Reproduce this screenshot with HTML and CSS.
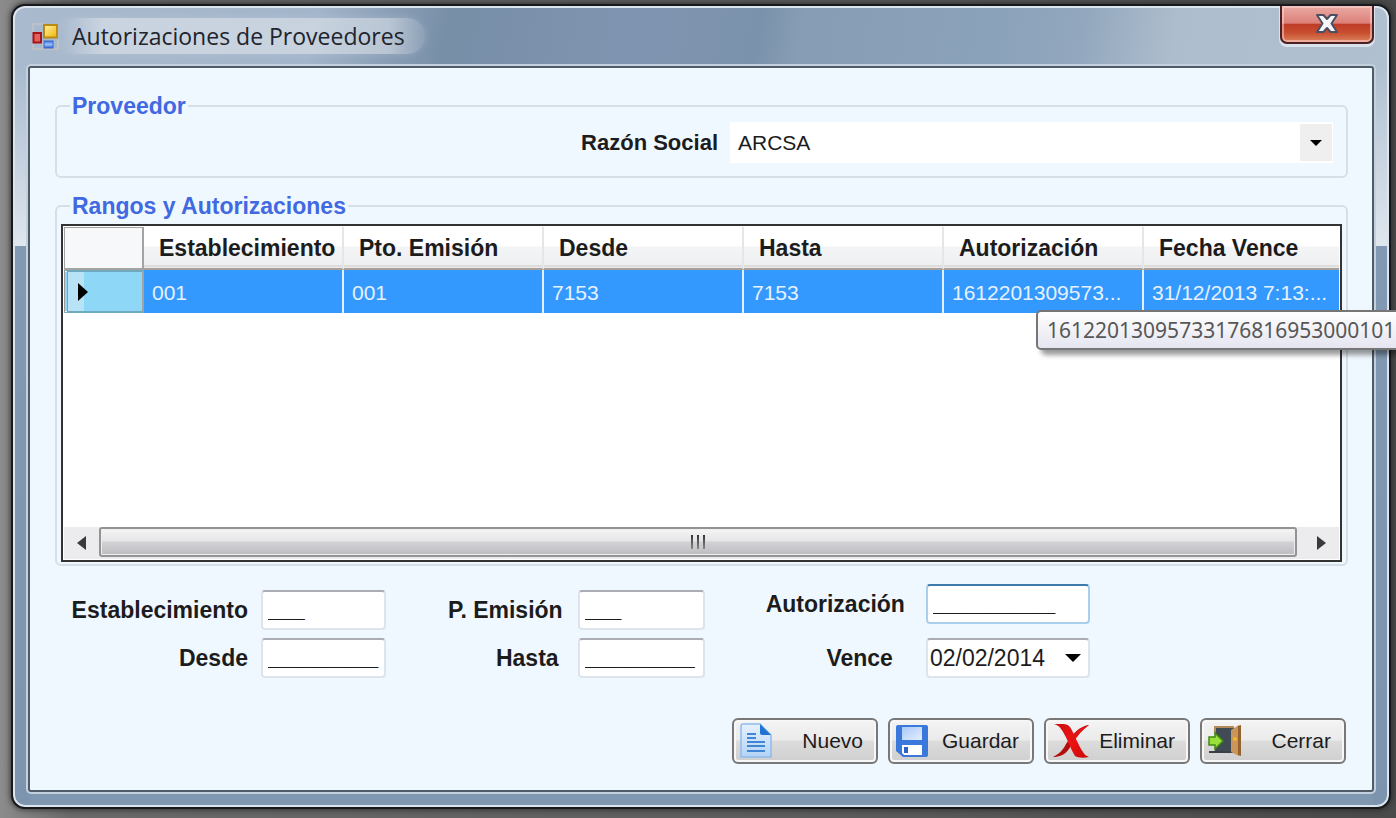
FILE: index.html
```html
<!DOCTYPE html>
<html lang="es">
<head>
<meta charset="utf-8">
<title>Autorizaciones de Proveedores</title>
<link rel="stylesheet" href="styles.css">
</head>
<body>
<div class="desktop">
  <main class="window">
    <header class="titlebar">
      <svg class="app-icon" width="27" height="27" viewBox="0 0 27 27" aria-hidden="true">
        <defs>
          <linearGradient id="gy" x1="0" y1="0" x2="1" y2="1"><stop offset="0" stop-color="#fff2a8"/><stop offset="1" stop-color="#f0b400"/></linearGradient>
          <linearGradient id="gb" x1="0" y1="0" x2="0" y2="1"><stop offset="0" stop-color="#3f74dc"/><stop offset=".5" stop-color="#9cc0fa"/><stop offset="1" stop-color="#2f62cc"/></linearGradient>
        </defs>
        <path d="M1 10V1h10M1 19v7h10v-8M11 26h15v-9" fill="none" stroke="#c3c3c3" stroke-width="1.5"/>
        <rect x="1.5" y="10" width="7.500" height="9.500" fill="#e2615a" stroke="#a8141c" stroke-width="2"/>
        <rect x="12" y="2" width="13" height="12.500" fill="url(#gy)" stroke="#b98a10" stroke-width="2"/>
        <rect x="12" y="18" width="9" height="7" fill="url(#gb)" stroke="#3a66c8" stroke-width="1"/>
      </svg>
      <h1 class="title">Autorizaciones de Proveedores</h1>
      <button class="close" type="button" aria-label="Cerrar ventana">
        <svg width="24" height="22" viewBox="0 0 24 22" aria-hidden="true">
          <path d="M2 2h6.500L12 6 15.500 2H22l-5.500 8.500L22 19h-6.500L12 15l-3.500 4H2l5.500-8.500z" fill="#f6f6f8" stroke="#4a4f64" stroke-width="2" stroke-linejoin="round"/>
        </svg>
      </button>
    </header>

    <form class="client">
      <fieldset class="group">
        <legend>Proveedor</legend>
        <div class="supplier">
          <label class="label" for="razon">Razón Social</label>
          <span class="combo">
            <select id="razon"><option>ARCSA</option></select>
            <span class="combo-arrow" aria-hidden="true"><i class="caret"></i></span>
          </span>
        </div>
      </fieldset>

      <fieldset class="group group-grid">
        <legend>Rangos y Autorizaciones</legend>
        <div class="grid">
          <table class="table">
            <colgroup><col class="col-head"><col class="col"><col class="col"><col class="col"><col class="col"><col class="col"><col></colgroup>
            <thead>
              <tr><td class="corner"></td><th>Establecimiento</th><th>Pto. Emisión</th><th>Desde</th><th>Hasta</th><th>Autorización</th><th>Fecha Vence</th></tr>
            </thead>
            <tbody>
              <tr><td class="row-head"><i class="row-mark"></i></td><td>001</td><td>001</td><td>7153</td><td>7153</td><td>1612201309573...</td><td>31/12/2013 7:13:...</td></tr>
            </tbody>
          </table>
          <div class="scroll">
            <button class="scroll-btn" type="button" aria-label="Desplazar a la izquierda"><i class="tri tri-left"></i></button>
            <div class="thumb"><i></i><i></i><i></i></div>
            <button class="scroll-btn" type="button" aria-label="Desplazar a la derecha"><i class="tri tri-right"></i></button>
          </div>
        </div>
      </fieldset>

      <div class="fields">
        <div class="pair pair-a">
          <label class="label" for="est">Establecimiento</label><input class="box" id="est" value="___">
          <label class="label" for="desde">Desde</label><input class="box" id="desde" value="_________">
        </div>
        <div class="pair pair-b">
          <label class="label" for="emi">P. Emisión</label><input class="box" id="emi" value="___">
          <label class="label inset-s" for="hasta">Hasta</label><input class="box" id="hasta" value="_________">
        </div>
        <div class="pair pair-c">
          <label class="label" for="aut">Autorización</label><input class="box active" id="aut" value="__________">
          <label class="label inset-m" for="vence">Vence</label>
          <span class="box date"><input id="vence" value="02/02/2014"><button type="button" aria-label="Abrir calendario"><i class="caret caret-l"></i></button></span>
        </div>
      </div>

      <div class="actions">
        <button class="btn" type="button">
          <svg width="32" height="36" viewBox="0 0 32 36" aria-hidden="true">
            <defs><linearGradient id="doc" x1="0" y1="0" x2="0" y2="1"><stop offset="0" stop-color="#e6f1fd"/><stop offset="1" stop-color="#b4d3f5"/></linearGradient></defs>
            <path d="M1 3q0-2 2-2h17l11 11v22H1z" fill="url(#doc)" stroke="#8fbcec" stroke-width="1.500"/>
            <path d="M20 1l11 11H22q-2 0-2-2z" fill="#1f73d2"/>
            <path d="M7 11h9M7 15h9M7 19h18M7 23h18M7 28h18" stroke="#3f86d6" stroke-width="2"/>
          </svg>
          <span>Nuevo</span>
        </button>
        <button class="btn" type="button">
          <svg width="32" height="32" viewBox="0 0 32 32" aria-hidden="true">
            <defs><linearGradient id="dsk" x1="0" y1="0" x2="1" y2="1"><stop offset="0" stop-color="#a9c8fa"/><stop offset="1" stop-color="#e4eefd"/></linearGradient></defs>
            <path d="M2 0h28q2 0 2 2v28q0 2-2 2H7l-7-6V2q0-2 2-2z" fill="#3b78dc"/>
            <path d="M6 2h20v13H6z" fill="url(#dsk)"/>
            <path d="M6 20h20v10H8l-2-2z" fill="#fff"/>
            <rect x="8" y="22" width="4" height="6" fill="#2a62c8"/>
          </svg>
          <span>Guardar</span>
        </button>
        <button class="btn" type="button">
          <svg width="38" height="34" viewBox="0 0 38 34" aria-hidden="true">
            <defs><linearGradient id="red" x1="0" y1="0" x2="1" y2="1"><stop offset="0" stop-color="#c81010"/><stop offset=".5" stop-color="#f01414"/><stop offset="1" stop-color="#c80808"/></linearGradient></defs>
            <path d="M37 1C27 2 20 11 14 20 11 26 7 30 1 33c6 0 12-2 16-8 5-9 11-18 20-24z" fill="#b40d0d"/>
            <path d="M2 0c6 0 13-1 16 3 5 8 8 18 13 25 1 2 3 4 6 5-5 1-11 1-14-1C18 24 14 11 9 5 7 2 5 1 2 0z" fill="url(#red)"/>
            <path d="M37 1C28 3 22 9 18 15l3 4c4-7 9-13 16-18z" fill="#e01515"/>
          </svg>
          <span>Eliminar</span>
        </button>
        <button class="btn" type="button">
          <svg width="34" height="32" viewBox="0 0 34 32" aria-hidden="true">
            <path d="M7 2h19v25H7z" fill="#414b55"/>
            <path d="M7 9V2h19" fill="none" stroke="#b48a58" stroke-width="2"/>
            <path d="M1 27h24" stroke="#3a3f45" stroke-width="2"/>
            <path d="M23 5l8-5v31l-8-4z" fill="#c99559"/><path d="M30 1l3-1v31l-3-1z" fill="#94632f"/>
            <circle cx="27" cy="14" r="2" fill="#f2b92e"/>
            <path d="M1 12h6V8l8 8-8 8v-4H1z" fill="#9be03a" stroke="#3f8a12" stroke-width="1.500"/>
          </svg>
          <span>Cerrar</span>
        </button>
      </div>
    </form>
  </main>
  <div class="tooltip" role="tooltip">16122013095733176816953000101</div>
</div>
</body>
</html>
```
FILE: styles.css
```css
* { box-sizing: border-box; }
body {
  margin: 0;
  font-family: "Liberation Sans", Arial, sans-serif;
  font-size: 21px;
  color: #1c1c1c;
}
button, input, select { font: inherit; color: inherit; margin: 0; }
button { padding: 0; border: 0; background: none; }

.desktop {
  position: relative;
  display: flex;
  min-height: 100vh;
  padding: 4px 5px 9px 11px;
  overflow: hidden;
  background: linear-gradient(90deg, #8c8c8c, #6a6a6a 5%, #5c5c5c 60%, #4a4a4a);
}
.window {
  flex: 1;
  min-width: 0;
  display: flex;
  flex-direction: column;
  padding: 0 15px 15px;
  border: 2px solid #17191c;
  border-radius: 14px;
  background:
    linear-gradient(180deg, #a9bace 60px, #dfe6ee 240px, #8299b3 240px, #7d94ae) left / 16px 100% no-repeat,
    linear-gradient(180deg, #b0c0d0 60px, #dfe6ee 240px, #8299b3 240px, #7d94ae) right / 16px 100% no-repeat,
    linear-gradient(100deg, #a9bace, #a3b5ca 300px, #788fa8 430px, #7f94b0 620px, #7b92ac 740px, #879db5 780px, #8ba2bb 980px, #93a8be 1060px, #aebdcd 1150px, #b0c0d0) top / 100% 64px no-repeat,
    #8097b1;
  box-shadow: inset 0 0 0 2px #dce5ee, 0 0 6px #222;
}
.titlebar {
  display: flex;
  align-items: flex-start;
  height: 60px;
  padding-left: 4px;
}
.app-icon { margin-top: 17px; }
.title {
  margin: 12px 0 0;
  padding: 0 20px 0 13px;
  font: 400 23px/36px "Open Sans", "Noto Sans", sans-serif;
  color: #20242c;
  border-radius: 18px;
  background: linear-gradient(90deg, rgba(255,255,255,0), rgba(255,255,255,.4) 12%, rgba(255,255,255,.4) 90%, rgba(255,255,255,.1));
  box-shadow: 0 0 8px rgba(255,255,255,.15);
}
.close {
  display: grid;
  place-items: center;
  width: 94px;
  height: 38px;
  margin-left: auto;
  border: 2px solid #4c2024;
  border-top: 0;
  border-radius: 0 0 7px 7px;
  background: linear-gradient(#e9aaa4, #dc8078 48%, #c03a26 50%, #c8502f 75%, #dd8460);
  box-shadow: inset 0 0 0 2px rgba(255,220,215,.5), 0 2px 0 1px rgba(235,242,248,.7);
}
.client {
  flex: 1;
  display: flex;
  flex-direction: column;
  margin: 0;
  padding: 25px 24px 26px 25px;
  border: 2px solid #505b68;
  border-radius: 3px;
  background: #f0f8ff;
  box-shadow: 0 0 0 2px #c3d0dd;
}

.group {
  min-width: 0;
  margin: 0 0 15px;
  padding: 3px 13px 13px;
  border: 2px solid #d6dfe7;
  border-radius: 6px;
}
.group legend {
  padding: 0 2px;
  font-weight: 700;
  font-size: 23px;
  line-height: 26px;
  color: #4169e1;
}
.group-grid { margin-bottom: 18px; padding: 5px 4px 2px; }
.group-grid legend { margin-left: 9px; }
.label { font-weight: 700; font-size: 23px; line-height: 26px; white-space: nowrap; }

.supplier { display: flex; align-items: center; justify-content: flex-end; gap: 12px; }
.supplier .label { font-size: 22px; }
.combo { position: relative; width: 603px; height: 41px; background: #fff; }
.combo select {
  width: 100%;
  height: 100%;
  padding: 0 40px 0 8px;
  border: 0;
  appearance: none;
  background: transparent;
}
.combo-arrow {
  position: absolute;
  top: 2px;
  right: 1px;
  bottom: 2px;
  display: grid;
  place-items: center;
  width: 32px;
  background: #efefef;
  pointer-events: none;
}
.caret { border: 6px solid transparent; border-top: 6px solid #000; border-bottom: 0; }
.caret-l { border-width: 8px 8px 0; }

.grid {
  display: flex;
  flex-direction: column;
  height: 338px;
  border: 2px solid #333;
  background: #fff;
  padding: 1px;
}
.table { width: 100%; table-layout: fixed; border-collapse: separate; border-spacing: 0; }
.col-head { width: 80px; }
.col { width: 200px; }
.table th, .table td { overflow: hidden; white-space: nowrap; text-align: left; }
.table th {
  height: 43px;
  padding: 2px 0 0 15px;
  font-size: 23px;
  border-right: 2px solid #e4e6e8;
  border-bottom: 2px solid #a5a09a;
  background: linear-gradient(#fff 45%, #f3f4f5 50%, #eff0f2 92%, #d8d8d8 94%, #f0ece8);
}
.table th:last-child, .table tbody td:last-child { border-right: 0; }
.table .corner { padding: 0; border: 2px solid #a5a3a2; border-width: 1px 2px 2px 1px; background: #f7f8fa; }
.table tbody td {
  height: 43px;
  padding: 2px 0 0 8px;
  color: #e6f1ff;
  background: #3399ff;
  border-right: 2px solid #e3f0fd;
}
.table .row-head {
  padding: 0 0 0 10px;
  border: 2px solid #6fa9be;
  border-left: 4px double #9a9a9a;
  border-right-color: #a5a3a2;
  background: linear-gradient(90deg, #b8e2f5 16px, #8fd7f7 16px);
}
.row-mark { display: block; width: 0; border: 9px solid transparent; border-left: 10px solid #000; border-right: 0; }

.scroll { display: flex; height: 32px; margin-top: auto; background: #ececee; }
.scroll-btn { display: grid; place-items: center; width: 35px; }
.scroll-btn:last-child { width: 42px; padding-left: 6px; }
.tri { border: 7px solid transparent; }
.tri-left { border-right: 9px solid #3a3a3a; border-left: 0; }
.tri-right { border-left: 9px solid #3a3a3a; border-right: 0; }
.thumb {
  flex: 1;
  display: flex;
  align-items: center;
  justify-content: center;
  gap: 4px;
  margin: 0 0 2px;
  border: 2px solid #939396;
  border-radius: 3px;
  background: linear-gradient(#f5f5f5, #e6e6e8 45%, #d2d2d5 50%, #bdbdc1);
  box-shadow: inset 0 0 0 1px #eee;
}
.thumb i { width: 2px; height: 14px; background: linear-gradient(#333, #888); }

.fields { display: flex; align-items: flex-end; }
.pair { display: grid; align-items: center; justify-items: end; gap: 8px 13px; }
.pair-a { grid-template-columns: 193px 125px; }
.pair-b { grid-template-columns: auto 127px; gap: 8px 15px; margin-left: 62px; }
.pair-c { grid-template-columns: auto 164px; gap: 14px 21px; margin-left: 61px; }
.inset-s { padding-right: 4px; }
.inset-m { padding-right: 12px; }
.box {
  width: 100%;
  height: 40px;
  padding: 0 5px;
  border: 2px solid #dfe3ec;
  border-top-color: #abadb3;
  border-radius: 4px;
  background: #fff;
  font-size: 22px;
  font-weight: 700;
}
.box.active { border-color: #a9cfec; border-top-color: #3d7bad; }
.date { display: flex; align-items: center; padding: 0 7px 0 2px; font-weight: 400; }
.date input { flex: 1; min-width: 0; padding: 0; border: 0; background: none; font-size: 23px; }
.date button { display: grid; }

.actions { display: flex; justify-content: flex-end; gap: 10px; margin-top: auto; padding-right: 2px; }
.btn {
  display: flex;
  align-items: center;
  justify-content: space-between;
  width: 146px;
  height: 46px;
  padding: 0 13px 0 6px;
  border: 2px solid #787878;
  border-radius: 6px;
  background: linear-gradient(#f3f3f3, #ebebeb 48%, #dcdcdc 50%, #cfcfcf);
  box-shadow: inset 0 0 0 2px #f7f7f7;
}
.tooltip {
  position: absolute;
  top: 310px;
  left: 1036px;
  right: -10px;
  height: 40px;
  padding-left: 9px;
  border: 2px solid #767676;
  border-radius: 5px;
  background: linear-gradient(#fff, #e4e5f0);
  box-shadow: 5px 5px 5px rgba(0,0,0,.4);
  font: 21px/36px "Noto Sans", "Open Sans", sans-serif;
  white-space: nowrap;
  color: #575757;
}
```
